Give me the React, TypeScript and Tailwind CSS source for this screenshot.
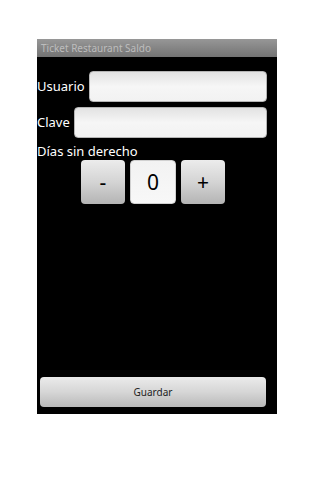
const font = { fontFamily: '"Noto Sans", "Open Sans", sans-serif' }

function Field({ label }: { label: string }) {
  return (
    <div className="flex items-center gap-[4px] pr-[10px]">
      <span className="text-[13px] leading-none text-white">{label}</span>
      <div className="h-[31px] flex-1 rounded-[4px] border border-[#b5b5b5] bg-gradient-to-b from-[#e2e2e2] via-[#f6f6f6] to-[#f2f2f2]" />
    </div>
  )
}

function Key({ children, light }: { children: React.ReactNode; light?: boolean }) {
  return (
    <div
      className={
        "flex h-[44px] items-center justify-center rounded-[4px] text-[21px] leading-none text-black " +
        (light
          ? "w-[46px] border border-[#d0d0d0] bg-gradient-to-b from-[#f2f2f2] to-[#f8f8f8]"
          : "w-[44px] bg-gradient-to-b from-[#ececec] via-[#d4d4d4] to-[#b4b4b4]")
      }
    >
      {children}
    </div>
  )
}

export default function App() {
  return (
    <div className="h-[480px] w-[320px] bg-white pt-[39px] pl-[37px]" style={font}>
      <div className="flex h-[375px] w-[240px] flex-col bg-black">
        <div className="flex h-[18px] items-center bg-gradient-to-b from-[#979797] to-[#737373] pl-[4px] text-[10px] text-[#bdbdbd]">
          Ticket Restaurant Saldo
        </div>
        <div className="mt-[14px] flex flex-col gap-[5px]">
          <Field label="Usuario" />
          <Field label="Clave" />
        </div>
        <div className="mt-[5px] text-[13px] leading-[17px] text-white">Días sin derecho</div>
        <div className="ml-[44px] flex gap-[5px]">
          <Key>-</Key>
          <Key light>0</Key>
          <Key>+</Key>
        </div>
        <div className="mt-auto mb-[7px] ml-[3px] flex h-[30px] w-[226px] items-center justify-center rounded-[4px] bg-gradient-to-b from-[#ebebeb] via-[#d6d6d6] to-[#b9b9b9] text-[10px] text-[#222]">
          Guardar
        </div>
      </div>
    </div>
  )
}
